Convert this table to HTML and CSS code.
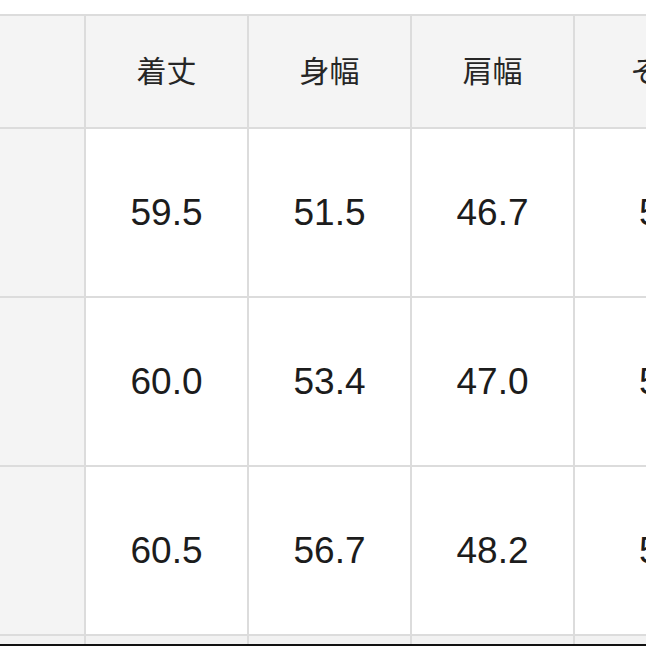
FILE: index.html
```html
<!DOCTYPE html>
<html lang="ja">
<head>
<meta charset="utf-8">
<title>サイズ表</title>
<link rel="stylesheet" href="styles.css">
</head>
<body>
<div class="page">
  <div class="size-table">
    <div class="cell head side"></div>
    <div class="cell head">着丈</div>
    <div class="cell head">身幅</div>
    <div class="cell head">肩幅</div>
    <div class="cell head">そで丈</div>

    <div class="cell side"></div>
    <div class="cell data">59.5</div>
    <div class="cell data">51.5</div>
    <div class="cell data">46.7</div>
    <div class="cell data">59.0</div>

    <div class="cell side"></div>
    <div class="cell data">60.0</div>
    <div class="cell data">53.4</div>
    <div class="cell data">47.0</div>
    <div class="cell data">59.5</div>

    <div class="cell side"></div>
    <div class="cell data">60.5</div>
    <div class="cell data">56.7</div>
    <div class="cell data">48.2</div>
    <div class="cell data">59.8</div>

    <div class="cell side tail"></div>
    <div class="cell tail"></div>
    <div class="cell tail"></div>
    <div class="cell tail"></div>
    <div class="cell tail"></div>
  </div>
  <div class="edge"></div>
</div>
</body>
</html>
```

FILE: styles.css
```css
html, body {
  margin: 0;
  padding: 0;
  background: #ffffff;
}

body {
  width: 646px;
  height: 646px;
  overflow: hidden;
}

.page {
  width: 646px;
  height: 646px;
  padding-top: 14px;
  box-sizing: border-box;
  display: flex;
  flex-direction: column;
  overflow: hidden;
}

.size-table {
  display: grid;
  grid-template-columns: 84px 161px 161px 161px 200px;
  grid-template-rows: 111px 167px 167px 167px 8px;
  gap: 2px;
  border-top: 2px solid #dcdcdc;
  background: #dcdcdc;
  width: 775px;
  flex: none;
}

.cell {
  display: flex;
  align-items: center;
  justify-content: center;
  background: #ffffff;
  color: #1c1c1c;
  font-family: "Liberation Sans", Arial, sans-serif;
  font-size: 37px;
  white-space: nowrap;
  overflow: hidden;
}

.head {
  background: #f4f4f4;
  color: #262626;
  font-family: "Noto Sans CJK JP", "Noto Sans", sans-serif;
  font-size: 30px;
  padding-bottom: 6px;
  box-sizing: border-box;
}

.side {
  background: #f4f4f4;
}

.tail {
  background: #f2f2f2;
}

.edge {
  height: 2px;
  background: #111111;
  flex: none;
}
```
